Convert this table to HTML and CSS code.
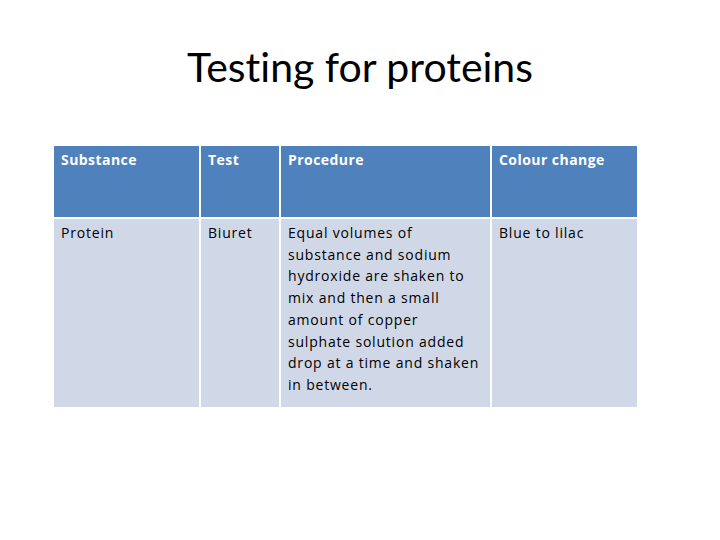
FILE: index.html
```html
<!DOCTYPE html>
<html>
<head>
<meta charset="utf-8">
<link rel="stylesheet" href="styles.css">
</head>
<body>
<div class="slide">
  <h1 class="title">Testing for proteins</h1>
  <div class="table">
    <div class="cell head">Substance</div>
    <div class="cell head">Test</div>
    <div class="cell head">Procedure</div>
    <div class="cell head">Colour change</div>
    <div class="cell body">Protein</div>
    <div class="cell body">Biuret</div>
    <div class="cell body proc">Equal volumes of<br>substance and sodium<br>hydroxide are shaken to<br>mix and then a small<br>amount of copper<br>sulphate solution added<br>drop at a time and shaken<br>in between.</div>
    <div class="cell body">Blue to lilac</div>
  </div>
</div>
</body>
</html>
```
FILE: styles.css
```css
html, body {
  margin: 0;
  padding: 0;
  background: #ffffff;
}
.slide {
  width: 720px;
  height: 540px;
  font-family: "Open Sans", Lato, sans-serif;
  padding-top: 43px;
  box-sizing: border-box;
}
.title {
  margin: 0;
  font-family: Lato, sans-serif;
  font-variant-ligatures: none;
  font-weight: 400;
  font-size: 41px;
  line-height: 48px;
  text-align: center;
  color: #000;
}
.table {
  margin: 55px 0 0 54px;
  display: grid;
  grid-template-columns: 145px 78px 209px 145px;
  grid-template-rows: 71px 188px;
  gap: 2px;
  width: 583px;
}
.cell {
  padding: 3px 6px 0 7px;
  font-size: 14px;
  line-height: 21.7px;
  white-space: nowrap;
}
.head {
  background: #4f81bd;
  color: #ffffff;
  font-weight: 700;
  letter-spacing: 0.45px;
}
.body {
  background: #d0d8e8;
  color: #000;
  letter-spacing: 0.8px;
}
```
